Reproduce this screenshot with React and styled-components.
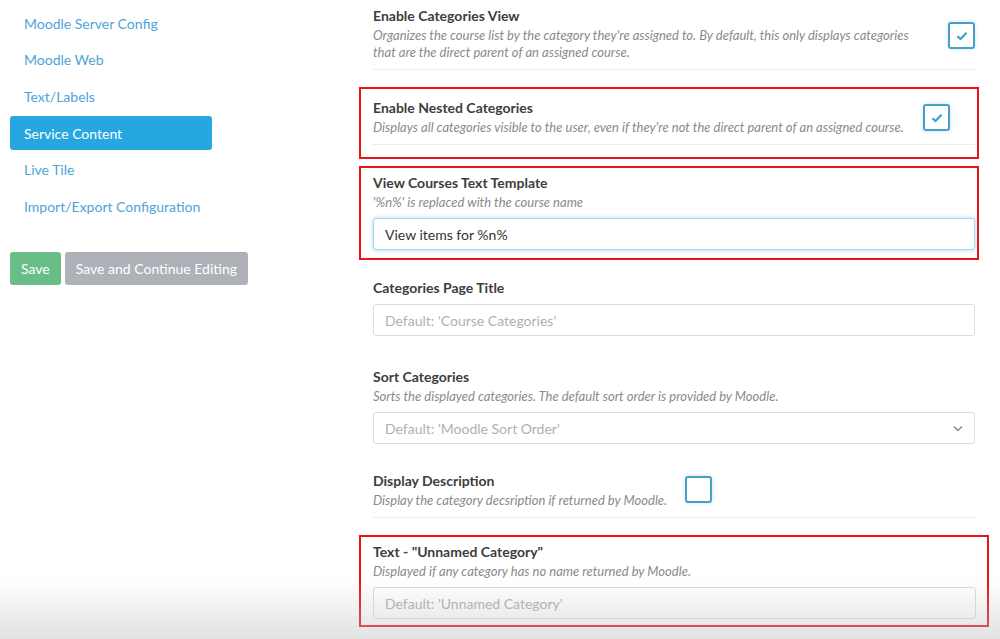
import React from 'react';
import styled, { createGlobalStyle } from 'styled-components';

const Global = createGlobalStyle`
  body { margin: 0; background: #fff; font-family: Lato, 'Open Sans', sans-serif; overflow: hidden; }
`;

const Page = styled.div`
  display: flex;
  height: 639px;
  position: relative;
`;

const Sidebar = styled.nav`
  width: 349px;
  padding: 6px 0 0 10px;
  display: flex;
  flex-direction: column;
`;

const NavItem = styled.div`
  width: 202px;
  height: 34px;
  box-sizing: border-box;
  margin-bottom: 2.7px;
  padding-left: 14px;
  display: flex;
  align-items: center;
  font-size: 14px;
  border-radius: 3px;
  color: ${p => (p.active ? '#fff' : '#4ea5d6')};
  background: ${p => (p.active ? '#27a7e0' : 'transparent')};
`;

const Buttons = styled.div`
  display: flex;
  gap: 4px;
  margin-top: 26px;
`;

const Button = styled.button`
  height: 33px;
  padding: 0 11px;
  border: none;
  border-radius: 3px;
  font-family: Lato, sans-serif;
  font-size: 14px;
  color: #fff;
  background: ${p => (p.primary ? '#69bd86' : '#aeb1b7')};
`;

const Main = styled.main`
  width: 620px;
  display: flex;
  flex-direction: column;
`;

const Section = styled.section`
  height: ${p => p.h}px;
  box-sizing: border-box;
  margin-top: ${p => p.mt || 0}px;
  padding: ${p => p.pt}px ${p => p.pr || 2}px 0 12px;
  border: 2px solid ${p => (p.marked ? '#e8141a' : 'transparent')};
  width: ${p => p.w || 620}px;
`;

const Row = styled.div`
  display: flex;
  align-items: flex-start;
  justify-content: ${p => (p.tight ? 'flex-start' : 'space-between')};
  gap: 18px;
  padding-bottom: 8px;
  border-bottom: ${p => (p.divider ? '1px solid #ececec' : 'none')};
`;

const Title = styled.div`
  font-size: 14px;
  font-weight: 700;
  color: #3d3d3d;
  line-height: 18px;
`;

const Desc = styled.div`
  font-size: 13px;
  font-style: italic;
  color: #8a8a8a;
  line-height: 17px;
  margin-top: 2px;
`;

const Check = styled.div`
  width: 23px;
  height: 23px;
  flex: none;
  margin-top: ${p => p.mt || 0}px;
  margin-right: ${p => p.mr || 0}px;
  border: 2px solid #4a9fc8;
  border-radius: 3px;
  box-shadow: 0 0 4px rgba(80, 180, 230, 0.35);
  display: flex;
  align-items: center;
  justify-content: center;
`;

const Input = styled.div`
  height: 32px;
  box-sizing: border-box;
  margin-top: 7px;
  padding: 0 11px;
  display: flex;
  align-items: center;
  justify-content: space-between;
  font-size: 14px;
  border-radius: 3px;
  border: 1px solid ${p => (p.focus ? '#a9d8ef' : '#dcdcdc')};
  box-shadow: ${p => (p.focus ? '0 0 4px rgba(80,180,230,0.5)' : 'none')};
  color: ${p => (p.value ? '#333' : '#b0b0b0')};
  background: #fff;
`;

const Shade = styled.div`
  position: absolute;
  left: 0;
  right: 0;
  bottom: 0;
  height: 60px;
  pointer-events: none;
  background: linear-gradient(to bottom, rgba(200,200,200,0), rgba(190,190,190,0.45));
`;

const Tick = () => (
  <svg width="12" height="10" viewBox="0 0 12 10">
    <path d="M1.5 5.2 L4.5 8 L10.5 1.8" fill="none" stroke="#3a9fd0" strokeWidth="2.2" />
  </svg>
);

const nav = ['Moodle Server Config', 'Moodle Web', 'Text/Labels', 'Service Content', 'Live Tile', 'Import/Export Configuration'];

export default function App() {
  return (
    <>
      <Global />
      <Page>
        <Sidebar>
          {nav.map(n => (
            <NavItem key={n} active={n === 'Service Content'}>{n}</NavItem>
          ))}
          <Buttons>
            <Button primary>Save</Button>
            <Button>Save and Continue Editing</Button>
          </Buttons>
        </Sidebar>
        <Main>
          <Section h={87} pt={5}>
            <Row divider>
              <div>
                <Title>Enable Categories View</Title>
                <Desc>Organizes the course list by the category they're assigned to. By default, this only displays categories<br />that are the direct parent of an assigned course.</Desc>
              </div>
              <Check mt={15}><Tick /></Check>
            </Row>
          </Section>
          <Section h={72} pt={10} marked>
            <Row divider>
              <div>
                <Title>Enable Nested Categories</Title>
                <Desc>Displays all categories visible to the user, even if they're not the direct parent of an assigned course.</Desc>
              </div>
              <Check mt={5} mr={25}><Tick /></Check>
            </Row>
          </Section>
          <Section h={94} pt={6} mt={7} marked>
            <Title>View Courses Text Template</Title>
            <Desc>'%n%' is replaced with the course name</Desc>
            <Input focus value>View items for %n%</Input>
          </Section>
          <Section h={94} pt={17}>
            <Title>Categories Page Title</Title>
            <Input>Default: 'Course Categories'</Input>
          </Section>
          <Section h={106} pt={12}>
            <Title>Sort Categories</Title>
            <Desc>Sorts the displayed categories. The default sort order is provided by Moodle.</Desc>
            <Input>
              Default: 'Moodle Sort Order'
              <svg width="10" height="7" viewBox="0 0 10 7"><path d="M1 1.5 L5 5.5 L9 1.5" fill="none" stroke="#888" strokeWidth="1.5" /></svg>
            </Input>
          </Section>
          <Section h={75} pt={10}>
            <Row divider tight>
              <div>
                <Title>Display Description</Title>
                <Desc>Display the category decsription if returned by Moodle.</Desc>
              </div>
              <Check mt={4} />
            </Row>
          </Section>
          <Section h={92} pt={6} w={630} pr={11} marked>
            <Title>Text - "Unnamed Category"</Title>
            <Desc>Displayed if any category has no name returned by Moodle.</Desc>
            <Input>Default: 'Unnamed Category'</Input>
          </Section>
        </Main>
        <Shade />
      </Page>
    </>
  );
}
